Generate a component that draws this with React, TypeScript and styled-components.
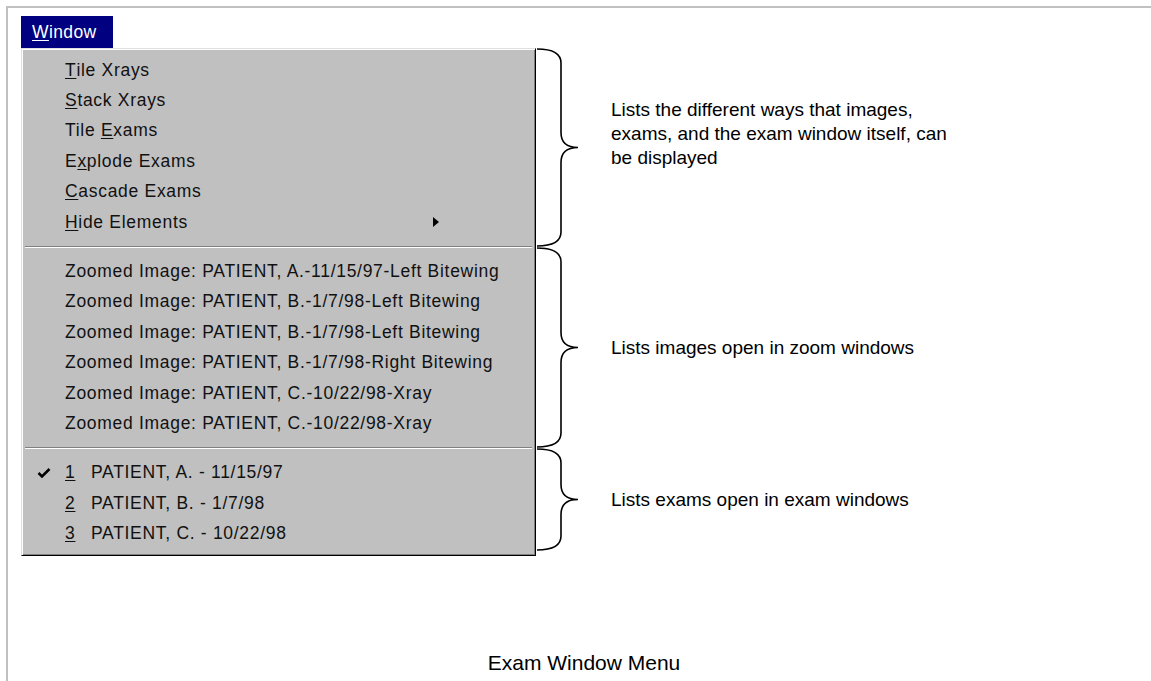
import React from "react";
import styled, { createGlobalStyle } from "styled-components";

const Global = createGlobalStyle`
  html, body { margin: 0; padding: 0; background: #ffffff; }
  body { font-family: "Liberation Sans", Arial, sans-serif; color: #000; }
  #root { height: 681px; overflow: hidden; }
`;

const Frame = styled.div`
  margin: 6px 0 0 6px;
  height: 675px;
  box-sizing: border-box;
  border-left: 2px solid #c0c0c0;
  border-top: 2px solid #c0c0c0;
  padding: 8px 0 0 13px;
  display: flex;
  flex-direction: column;
`;

const Figure = styled.div`
  display: flex;
  align-items: flex-start;
`;

const MenuColumn = styled.div`
  display: flex;
  flex-direction: column;
  width: 515px;
`;

const MenuTitle = styled.div`
  width: 92px;
  height: 32px;
  box-sizing: border-box;
  background: #000080;
  color: #ffffff;
  font-size: 17.5px;
  letter-spacing: 0.4px;
  display: flex;
  align-items: center;
  padding-left: 11px;
`;

const Menu = styled.div`
  background: #c0c0c0;
  border-top: 1px solid #dfdfdf;
  border-left: 1px solid #dfdfdf;
  border-right: 1px solid #000000;
  border-bottom: 1px solid #000000;
  box-shadow: inset 1px 1px 0 #ffffff, inset -1px -1px 0 #808080;
  padding: 6px 2px;
`;

const Row = styled.div`
  height: 30.4px;
  display: flex;
  align-items: center;
  font-size: 17.5px;
  letter-spacing: 0.7px;
  white-space: nowrap;
  color: #111;
`;

const CheckSlot = styled.span`
  width: 41px;
  flex: none;
  display: flex;
  align-items: center;
  padding-left: 13px;
  box-sizing: border-box;
`;

const Label = styled.span`
  flex: 1;
  display: flex;
  align-items: center;
`;

const Mnemonic = styled.span`
  text-decoration: underline;
  text-underline-offset: 2px;
  text-decoration-thickness: 1px;
`;

const Number = styled.span`
  width: 26px;
  flex: none;
`;

const Arrow = styled.span`
  width: 0;
  height: 0;
  border-top: 5px solid transparent;
  border-bottom: 5px solid transparent;
  border-left: 6px solid #000;
  margin-right: 94px;
`;

const Separator = styled.div`
  height: 19px;
  display: flex;
  align-items: center;
  padding: 0 1px;
`;

const SeparatorLine = styled.div`
  flex: 1;
  border-top: 1px solid #808080;
  border-bottom: 1px solid #ffffff;
`;

const Annotations = styled.div`
  margin-top: 32px;
  display: flex;
  flex-direction: column;
`;

const Annotation = styled.div<{ $h: number }>`
  height: ${(p) => p.$h}px;
  display: flex;
  align-items: center;
`;

const BraceSvg = styled.svg`
  flex: none;
  display: block;
`;

const Note = styled.div<{ $raise?: number }>`
  margin-left: 31px;
  margin-bottom: ${(p) => (p.$raise ? p.$raise * 2 : 0)}px;
  font-size: 19px;
  line-height: 24px;
  white-space: nowrap;
`;

const Caption = styled.div`
  margin-top: 96px;
  padding-right: 4px;
  text-align: center;
  font-size: 21px;
  line-height: 22px;
`;

function Brace({ h }: { h: number }) {
  const W = 44;
  const x = 25;
  const tip = 42;
  const r = 15;
  const m = h / 2;
  const d = `M1 1 Q${x} 1 ${x} ${r} L${x} ${m - r} Q${x} ${m} ${tip} ${m} Q${x} ${m} ${x} ${m + r} L${x} ${h - r} Q${x} ${h - 1} 1 ${h - 1}`;
  return (
    <BraceSvg width={W} height={h} viewBox={`0 0 ${W} ${h}`}>
      <path d={d} fill="none" stroke="#000" strokeWidth={1.6} />
    </BraceSvg>
  );
}

function Check() {
  return (
    <svg width="14" height="12" viewBox="0 0 14 12">
      <path d="M1.5 6 L5 9.5 L12.5 2" fill="none" stroke="#000" strokeWidth={2.6} />
    </svg>
  );
}

const zoomed = [
  "PATIENT, A.-11/15/97-Left Bitewing",
  "PATIENT, B.-1/7/98-Left Bitewing",
  "PATIENT, B.-1/7/98-Left Bitewing",
  "PATIENT, B.-1/7/98-Right Bitewing",
  "PATIENT, C.-10/22/98-Xray",
  "PATIENT, C.-10/22/98-Xray",
];

const exams = [
  { n: "1", t: "PATIENT, A. - 11/15/97", checked: true },
  { n: "2", t: "PATIENT, B. - 1/7/98", checked: false },
  { n: "3", t: "PATIENT, C. - 10/22/98", checked: false },
];

export default function App() {
  return (
    <>
      <Global />
      <Frame>
        <Figure>
          <MenuColumn>
            <MenuTitle>
              <span>
                <Mnemonic>W</Mnemonic>indow
              </span>
            </MenuTitle>
            <Menu>
              <Row>
                <CheckSlot />
                <Label>
                  <Mnemonic>T</Mnemonic>ile Xrays
                </Label>
              </Row>
              <Row>
                <CheckSlot />
                <Label>
                  <Mnemonic>S</Mnemonic>tack Xrays
                </Label>
              </Row>
              <Row>
                <CheckSlot />
                <Label>
                  <span>
                    Tile <Mnemonic>E</Mnemonic>xams
                  </span>
                </Label>
              </Row>
              <Row>
                <CheckSlot />
                <Label>
                  <span>
                    E<Mnemonic>x</Mnemonic>plode Exams
                  </span>
                </Label>
              </Row>
              <Row>
                <CheckSlot />
                <Label>
                  <span>
                    <Mnemonic>C</Mnemonic>ascade Exams
                  </span>
                </Label>
              </Row>
              <Row>
                <CheckSlot />
                <Label>
                  <span>
                    <Mnemonic>H</Mnemonic>ide Elements
                  </span>
                </Label>
                <Arrow />
              </Row>
              <Separator>
                <SeparatorLine />
              </Separator>
              {zoomed.map((z, i) => (
                <Row key={i}>
                  <CheckSlot />
                  <Label>Zoomed Image: {z}</Label>
                </Row>
              ))}
              <Separator>
                <SeparatorLine />
              </Separator>
              {exams.map((e) => (
                <Row key={e.n}>
                  <CheckSlot>{e.checked ? <Check /> : null}</CheckSlot>
                  <Label>
                    <Number>
                      <Mnemonic>{e.n}</Mnemonic>
                    </Number>
                    <span>{e.t}</span>
                  </Label>
                </Row>
              ))}
            </Menu>
          </MenuColumn>
          <Annotations>
            <Annotation $h={199}>
              <Brace h={199} />
              <Note $raise={14}>
                Lists the different ways that images,
                <br />
                exams, and the exam window itself, can
                <br />
                be displayed
              </Note>
            </Annotation>
            <Annotation $h={201}>
              <Brace h={201} />
              <Note>Lists images open in zoom windows</Note>
            </Annotation>
            <Annotation $h={103}>
              <Brace h={103} />
              <Note>Lists exams open in exam windows</Note>
            </Annotation>
          </Annotations>
        </Figure>
        <Caption>Exam Window Menu</Caption>
      </Frame>
    </>
  );
}
